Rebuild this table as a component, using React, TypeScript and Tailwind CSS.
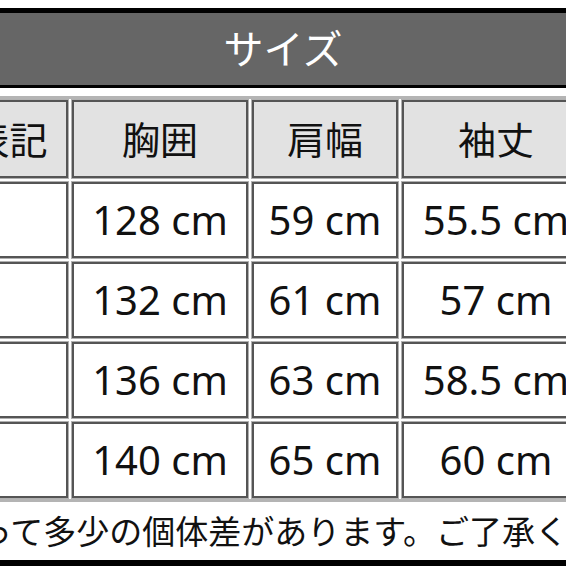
import React from "react";

const font = { fontFamily: '"Noto Sans", "Noto Sans CJK JP", sans-serif' };

const headers = ["サイズ表記", "胸囲", "肩幅", "袖丈"];
const rows = [
  ["S", "128 cm", "59 cm", "55.5 cm"],
  ["M", "132 cm", "61 cm", "57 cm"],
  ["L", "136 cm", "63 cm", "58.5 cm"],
  ["XL", "140 cm", "65 cm", "60 cm"],
];

export default function App() {
  return (
    <div
      className="w-[566px] h-[566px] overflow-hidden bg-white flex flex-col text-[#111]"
      style={font}
    >
      <div className="h-[8px] shrink-0" />
      <div className="h-[80px] shrink-0 bg-[#666666] border-t-[5px] border-b-[3px] border-black flex items-center justify-center text-white text-[40px] leading-none">
        サイズ
      </div>
      <div className="h-[8px] shrink-0" />
      <div className="shrink-0 border-t-[3px] border-b-[3px] border-[#b4b4b4] py-[1px]">
        <div className="grid grid-cols-[230px_176px_146px_188px] grid-rows-[78px_76px_76px_76px_76px] gap-[4px] ml-[-162px] w-max">
          {headers.map((h) => (
            <div
              key={h}
              className="bg-[#e2e2e2] border-2 border-[#555555] ring-1 ring-[#b0b0b0] flex items-center justify-center text-[38px] leading-none whitespace-nowrap"
            >
              {h}
            </div>
          ))}
          {rows.map((r) =>
            r.map((c, i) => (
              <div
                key={r[0] + i}
                className="bg-white border-2 border-[#555555] ring-1 ring-[#b0b0b0] flex items-center justify-center text-[40px] leading-none whitespace-nowrap"
              >
                {c}
              </div>
            ))
          )}
        </div>
      </div>
      <div className="h-[58px] shrink-0 flex items-center overflow-hidden">
        <span className="ml-[-152px] whitespace-nowrap text-[33px] leading-none">
          製品によって多少の個体差があります。ご了承ください。
        </span>
      </div>
      <div className="flex-1 bg-black" />
    </div>
  );
}
